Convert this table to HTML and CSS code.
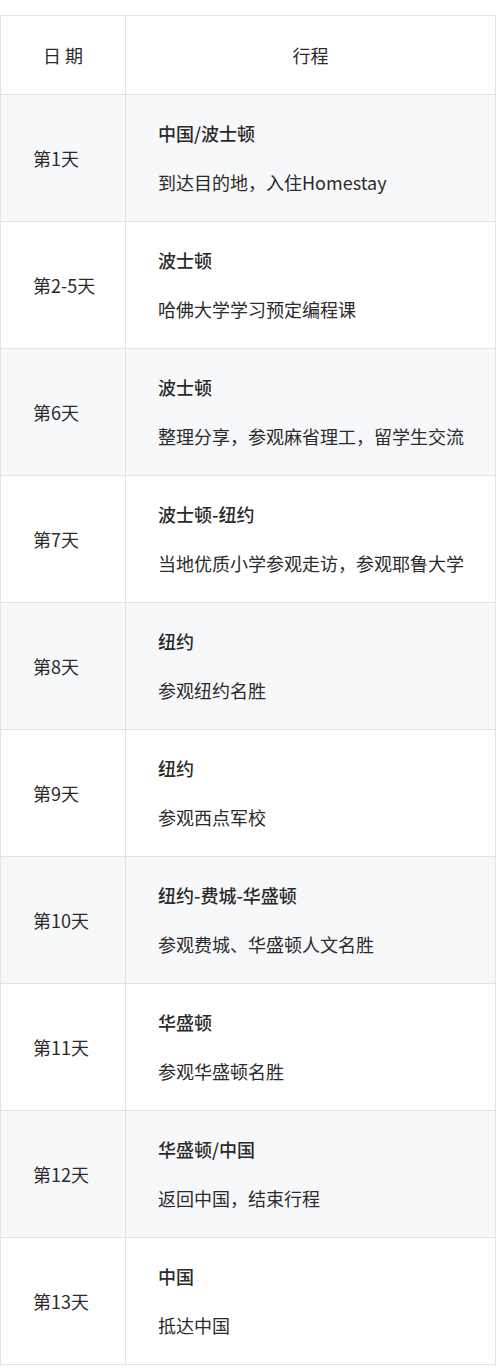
FILE: index.html
```html
<!DOCTYPE html>
<html lang="zh-CN">
<head>
<meta charset="utf-8">
<link rel="stylesheet" href="styles.css">
</head>
<body>
<table class="plan">
  <colgroup><col class="col-date"><col class="col-trip"></colgroup>
  <thead>
    <tr><th>日 期</th><th>行程</th></tr>
  </thead>
  <tbody>
    <tr><td class="day">第1天</td><td class="trip"><p class="place">中国/波士顿</p><p class="desc">到达目的地，入住Homestay</p></td></tr>
    <tr><td class="day">第2-5天</td><td class="trip"><p class="place">波士顿</p><p class="desc">哈佛大学学习预定编程课</p></td></tr>
    <tr><td class="day">第6天</td><td class="trip"><p class="place">波士顿</p><p class="desc">整理分享，参观麻省理工，留学生交流</p></td></tr>
    <tr><td class="day">第7天</td><td class="trip"><p class="place">波士顿-纽约</p><p class="desc">当地优质小学参观走访，参观耶鲁大学</p></td></tr>
    <tr><td class="day">第8天</td><td class="trip"><p class="place">纽约</p><p class="desc">参观纽约名胜</p></td></tr>
    <tr><td class="day">第9天</td><td class="trip"><p class="place">纽约</p><p class="desc">参观西点军校</p></td></tr>
    <tr><td class="day">第10天</td><td class="trip"><p class="place">纽约-费城-华盛顿</p><p class="desc">参观费城、华盛顿人文名胜</p></td></tr>
    <tr><td class="day">第11天</td><td class="trip"><p class="place">华盛顿</p><p class="desc">参观华盛顿名胜</p></td></tr>
    <tr><td class="day">第12天</td><td class="trip"><p class="place">华盛顿/中国</p><p class="desc">返回中国，结束行程</p></td></tr>
    <tr><td class="day">第13天</td><td class="trip"><p class="place">中国</p><p class="desc">抵达中国</p></td></tr>
  </tbody>
</table>
</body>
</html>
```

FILE: styles.css
```css
html, body {
  margin: 0;
  padding: 0;
  background: #ffffff;
}
body {
  padding-top: 15px;
  font-family: "Noto Sans CJK SC", "Noto Sans", "Liberation Sans", sans-serif;
  color: #2b2b2b;
}
.plan {
  width: 496px;
  border-collapse: collapse;
  table-layout: fixed;
  font-size: 18px;
}
.col-date { width: 125px; }
.plan th, .plan td {
  border: 1px solid #e3e3e6;
}
.plan th {
  height: 78px;
  padding: 0;
  font-weight: 400;
  text-align: center;
  vertical-align: middle;
  background: #ffffff;
}
.plan tbody tr:nth-child(odd) td {
  background: #f7f8fa;
}
.plan tbody tr:nth-child(even) td {
  background: #ffffff;
}
.day {
  text-align: left;
  vertical-align: middle;
  padding: 0 0 0 32px;
  height: 126px;
}
.trip {
  padding: 25px 10px 26px 32px;
  vertical-align: middle;
}
.place {
  margin: 0 0 23px 0;
  line-height: 26px;
  font-weight: 500;
}
.desc {
  margin: 0;
  line-height: 26px;
}
```
